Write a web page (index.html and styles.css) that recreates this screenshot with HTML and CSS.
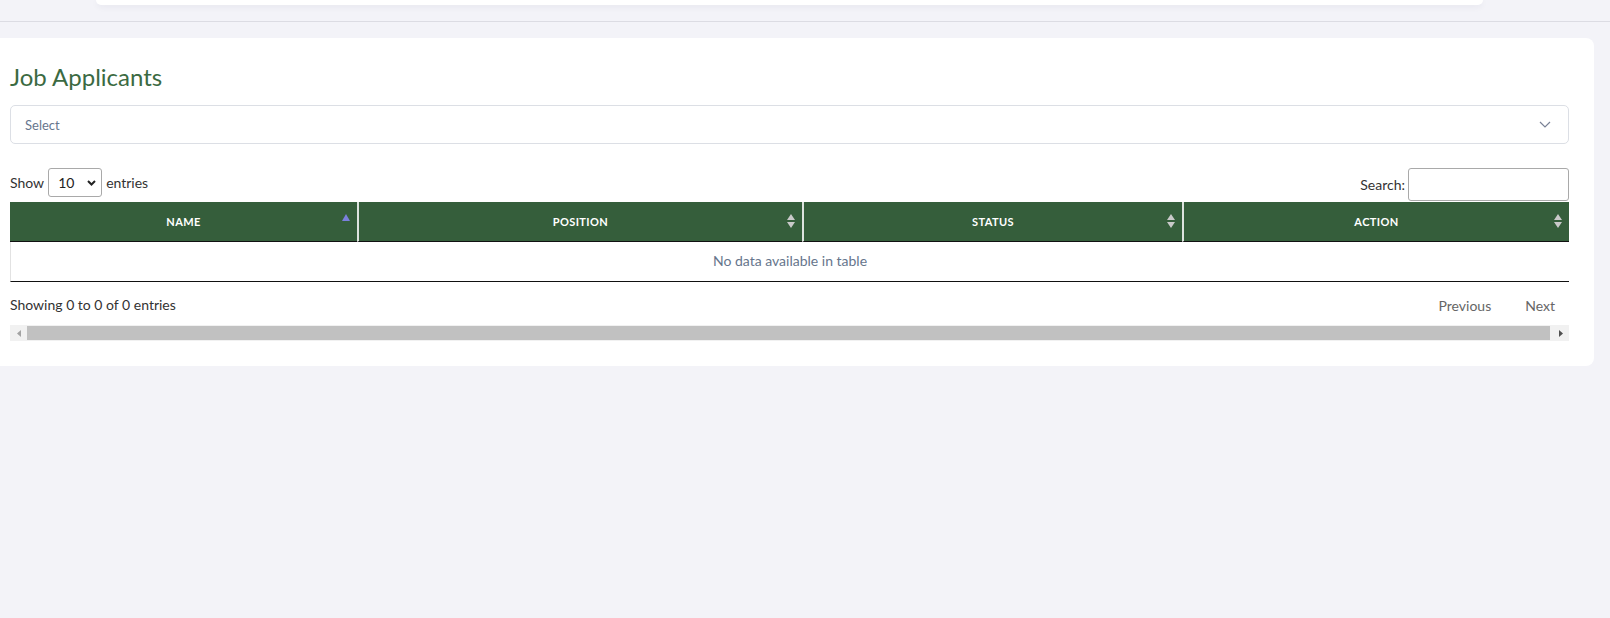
FILE: index.html
```html
<!DOCTYPE html>
<html lang="en">
<head>
<meta charset="utf-8">
<title>Job Applicants</title>
<link rel="stylesheet" href="styles.css">
</head>
<body>
<header class="topbar">
  <div class="topcard"></div>
</header>
<main class="card">
  <h1 class="title">Job Applicants</h1>
  <div class="picker">
    <span class="picker-text">Select</span>
    <svg class="picker-chev" width="12" height="7" viewBox="0 0 12 7"><path d="M1 1l5 5 5-5" fill="none" stroke="#7a8296" stroke-width="1.2"/></svg>
  </div>
  <div class="controls">
    <div class="length">
      <span>Show</span>
      <span class="len-select"><span>10</span><svg width="9" height="6" viewBox="0 0 9 6"><path d="M1 1l3.5 3.5L8 1" fill="none" stroke="#222" stroke-width="2"/></svg></span>
      <span>entries</span>
    </div>
    <label class="filter">Search:<input class="search" type="search"></label>
  </div>
  <table class="grid">
    <thead>
      <tr>
        <th class="c1">NAME<span class="sort sort-asc"><svg width="8" height="7" viewBox="0 0 8 7"><path d="M4 0L8 7H0z" fill="#7b80dc"/></svg></span></th>
        <th class="c2">POSITION<span class="sort"><svg width="8" height="14" viewBox="0 0 8 14"><path d="M4 0L8 6H0zM4 14L0 8h8z" fill="#c9c9c9"/></svg></span></th>
        <th class="c3">STATUS<span class="sort"><svg width="8" height="14" viewBox="0 0 8 14"><path d="M4 0L8 6H0zM4 14L0 8h8z" fill="#c9c9c9"/></svg></span></th>
        <th class="c4">ACTION<span class="sort"><svg width="8" height="14" viewBox="0 0 8 14"><path d="M4 0L8 6H0zM4 14L0 8h8z" fill="#c9c9c9"/></svg></span></th>
      </tr>
    </thead>
    <tbody>
      <tr><td colspan="4" class="empty">No data available in table</td></tr>
    </tbody>
  </table>
  <div class="footer">
    <div class="info">Showing 0 to 0 of 0 entries</div>
    <div class="paginate">
      <span class="pbtn">Previous</span>
      <span class="pbtn">Next</span>
    </div>
  </div>
  <div class="hscroll">
    <span class="sbtn"><svg width="4" height="7" viewBox="0 0 4 7"><path d="M4 0v7L0 3.5z" fill="#a3a3a3"/></svg></span>
    <span class="thumb"></span>
    <span class="sbtn"><svg width="4" height="7" viewBox="0 0 4 7"><path d="M0 0v7l4-3.5z" fill="#505050"/></svg></span>
  </div>
</main>
</body>
</html>
```
FILE: styles.css
```css
* { box-sizing: border-box; }
html, body { margin: 0; padding: 0; }
body {
  background: #f3f3f8;
  font-family: Lato, "Open Sans", sans-serif;
  color: #333;
  font-size: 14px;
  width: 1610px;
  height: 618px;
  overflow: hidden;
}
.topbar {
  height: 22px;
  border-bottom: 1px solid #dcdce3;
}
.topcard {
  margin-left: 96px;
  width: 1387px;
  height: 5px;
  background: #fff;
  border-radius: 0 0 6px 6px;
  box-shadow: 0 2px 6px rgba(40, 40, 80, 0.06);
}
.card {
  margin-top: 16px;
  margin-left: -10px;
  width: 1604px;
  background: #fff;
  border-radius: 8px;
  padding: 23px 25px 25px 20px;
}
.title {
  margin: 0;
  font-weight: 400;
  font-size: 24px;
  line-height: 32px;
  color: #3b6a42;
}
.picker {
  margin-top: 12px;
  height: 39px;
  border: 1px solid #dcdfe5;
  border-radius: 5px;
  display: flex;
  align-items: center;
  justify-content: space-between;
  padding: 0 17px 0 14px;
  color: #67768e;
  font-size: 13px;
}
.controls {
  margin-top: 24px;
  display: flex;
  justify-content: space-between;
  align-items: flex-start;
  height: 34px;
}
.length {
  display: flex;
  align-items: center;
  gap: 4px;
  height: 29px;
}
.len-select {
  width: 54px;
  height: 29px;
  border: 1px solid #a9a9a9;
  border-radius: 3px;
  display: flex;
  align-items: center;
  justify-content: space-between;
  padding: 0 5px 0 9px;
  color: #222;
}
.filter {
  display: flex;
  align-items: center;
  gap: 3px;
  height: 33px;
}
.search {
  width: 161px;
  height: 33px;
  border: 1px solid #a9a9a9;
  border-radius: 3px;
  margin: 0;
  padding: 0 5px;
  font: inherit;
}
.grid {
  width: 100%;
  border-collapse: separate;
  border-spacing: 0;
  table-layout: fixed;
}
.grid th {
  position: relative;
  background: #355e3b;
  color: #fff;
  font-weight: 700;
  font-size: 11px;
  letter-spacing: 0.4px;
  height: 40px;
  padding: 0;
  text-align: center;
  border-bottom: 1px solid #111;
}
.grid th + th { border-left: 2px solid #dde3df; }
.c1 { width: 347px; }
.c2 { width: 445px; }
.c3 { width: 380px; }
.sort {
  position: absolute;
  right: 7px;
  top: 12px;
  line-height: 0;
}
.sort-asc { top: 12px; right: 7px; }
.empty {
  height: 40px;
  padding: 0 0 2px;
  text-align: center;
  color: #66758c;
  border-left: 1px solid #e2e2e2;
  border-bottom: 1px solid #111;
}
.footer {
  height: 43px;
  padding-top: 1px;
  display: flex;
  align-items: center;
  justify-content: space-between;
}
.paginate { display: flex; gap: 6px; padding-top: 2px; }
.pbtn { padding: 0 14px; color: #666; }
.hscroll {
  height: 16px;
  background: #f1f1f1;
  display: flex;
  align-items: center;
}
.sbtn {
  width: 17px;
  height: 16px;
  display: flex;
  align-items: center;
  justify-content: center;
}
.thumb {
  flex: 1;
  height: 14px;
  background: #c1c1c1;
  margin-right: 2px;
}
```
